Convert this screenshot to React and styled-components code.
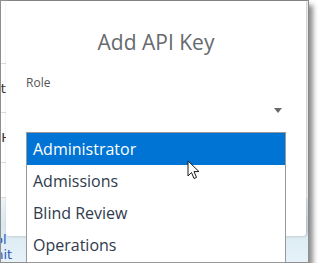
import styled, { createGlobalStyle } from "styled-components";

const GlobalStyle = createGlobalStyle`
  body {
    margin: 0;
    background: #ffffff;
    font-family: "Open Sans", "Liberation Sans", sans-serif;
  }
`;

const roles = ["Administrator", "Admissions", "Blind Review", "Operations"];

const App = () => {
  return (
    <>
      <GlobalStyle />
      <Frame>
        <Backdrop>
          <PageRow $height={64} />
          <PageRow $height={50}>t!</PageRow>
          <PageRow $height={50}>H</PageRow>
          <PageRow $height={36} />
          <PageFooter>
            <FooterLine>ool</FooterLine>
            <FooterLine>finit</FooterLine>
          </PageFooter>
        </Backdrop>
        <Modal>
          <Title>Add API Key</Title>
          <Field>
            <Label>Role</Label>
            <SelectBox>
              <Caret />
            </SelectBox>
          </Field>
        </Modal>
        <OptionList>
          {roles.map((role, i) => (
            <Option key={role} $active={i === 0}>
              {role}
            </Option>
          ))}
          <Pointer width="14" height="20" viewBox="0 0 14 20">
            <path
              d="M1 1 L1 16 L4.5 12.5 L7 18.5 L9.5 17.4 L7 11.6 L12 11.6 Z"
              fill="#ffffff"
              stroke="#1a1a1a"
              strokeWidth="1"
              strokeLinejoin="round"
            />
          </Pointer>
        </OptionList>
      </Frame>
    </>
  );
};

const Frame = styled.div`
  position: relative;
  width: 307px;
  height: 261px;
  border: 1px solid #8f8f8f;
  box-shadow: 4px 5px 5px rgba(0, 0, 0, 0.45);
  background: #ffffff;
`;

const Backdrop = styled.div`
  display: flex;
  flex-direction: column;
  height: 100%;
  overflow: hidden;
`;

const PageRow = styled.div`
  height: ${(props) => props.$height}px;
  border-bottom: 1px solid #dcdcdc;
  font-family: "DejaVu Sans", sans-serif;
  font-size: 13px;
  color: #333;
  display: flex;
  align-items: center;
  justify-content: flex-end;
  width: 10px;
  box-sizing: border-box;
`;

const PageFooter = styled.div`
  flex: 1;
  background: linear-gradient(180deg, #eef4f8 0%, #d9e8f1 40%, #e6f2f8 100%);
  padding-top: 34px;
  font-family: "DejaVu Sans", sans-serif;
  font-size: 13px;
  color: #2a56b8;
  line-height: 15px;
`;

const FooterLine = styled.div`
  margin-left: -14px;
`;

const Modal = styled.div`
  position: absolute;
  left: 5px;
  top: 0;
  width: 300px;
  height: 235px;
  background: #ffffff;
  border-radius: 0 0 3px 3px;
  box-shadow: 1px 0 3px rgba(0, 0, 0, 0.25);
  display: flex;
  flex-direction: column;
  padding: 27px 20px 0 20px;
  box-sizing: border-box;
`;

const Title = styled.div`
  text-align: center;
  font-size: 21px;
  color: #666a6e;
  font-weight: 400;
  margin-bottom: 18px;
`;

const Field = styled.div`
  display: flex;
  flex-direction: column;
`;

const Label = styled.div`
  font-size: 12px;
  color: #555;
`;

const SelectBox = styled.div`
  height: 30px;
  display: flex;
  align-items: center;
  justify-content: flex-end;
  padding-right: 4px;
`;

const Caret = styled.div`
  width: 0;
  height: 0;
  border-left: 4.5px solid transparent;
  border-right: 4.5px solid transparent;
  border-top: 5px solid #6a6a6a;
  margin-top: 8px;
`;

const OptionList = styled.div`
  position: absolute;
  left: 25px;
  top: 131px;
  width: 258px;
  height: 129px;
  background: #ffffff;
  border: 1px solid #999;
  display: flex;
  flex-direction: column;
`;

const Option = styled.div`
  height: 32px;
  display: flex;
  align-items: center;
  padding-left: 6px;
  font-size: 16px;
  color: ${(props) => (props.$active ? "#ffffff" : "#2f3b4c")};
  background: ${(props) => (props.$active ? "#0074d4" : "transparent")};
`;

const Pointer = styled.svg`
  position: absolute;
  left: 160px;
  top: 27px;
`;

export default App;
